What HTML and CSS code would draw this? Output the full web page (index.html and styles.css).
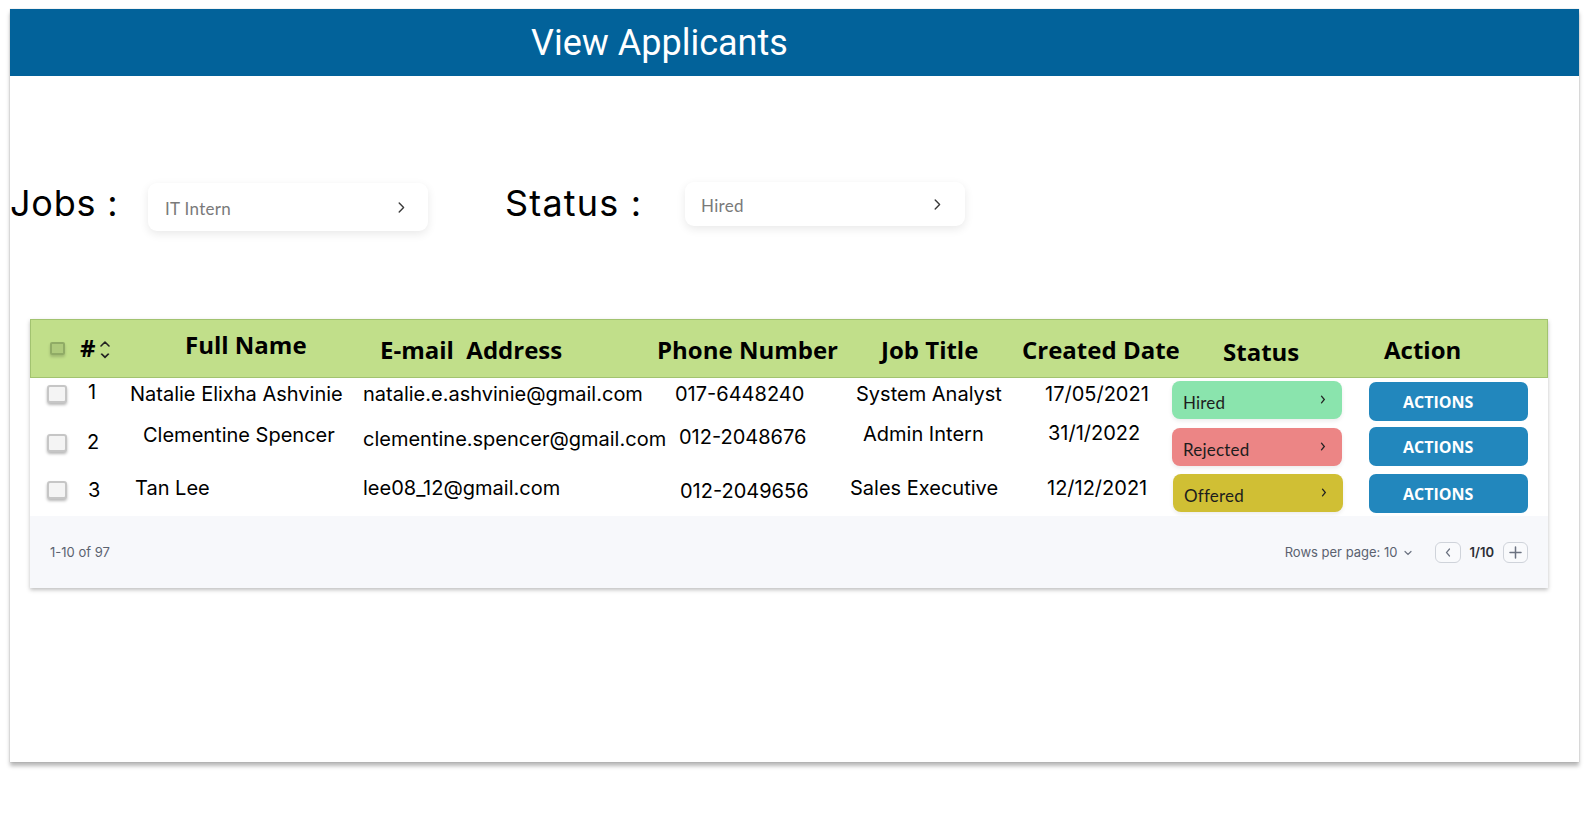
FILE: index.html
```html
<!DOCTYPE html>
<html lang="en">
<head>
<meta charset="utf-8">
<title>View Applicants</title>
<link rel="stylesheet" href="styles.css">
</head>
<body>
<div class="frame">
  <header class="topbar"><h1>View Applicants</h1></header>

  <section class="filters">
    <span class="flabel flabel-jobs">Jobs :</span>
    <div class="select select-jobs">
      <span class="select-text">IT Intern</span>
      <svg class="chev" width="7" height="11" viewBox="0 0 7 11"><path d="M1.2 1 L5.6 5.5 L1.2 10" fill="none" stroke="#3a3a3a" stroke-width="1.4" stroke-linecap="round" stroke-linejoin="round"/></svg>
    </div>
    <span class="flabel flabel-status">Status :</span>
    <div class="select select-status">
      <span class="select-text">Hired</span>
      <svg class="chev" width="7" height="11" viewBox="0 0 7 11"><path d="M1.2 1 L5.6 5.5 L1.2 10" fill="none" stroke="#3a3a3a" stroke-width="1.4" stroke-linecap="round" stroke-linejoin="round"/></svg>
    </div>
  </section>

  <div class="tcard">
    <div class="thead">
      <div class="c0 h-cb"><span class="hcb"></span></div>
      <div class="c1 h-num"><span>#</span>
        <svg class="sort" width="12" height="22" viewBox="0 0 12 22"><path d="M2 7 L6 3 L10 7" fill="none" stroke="#222" stroke-width="1.6" stroke-linecap="round" stroke-linejoin="round"/><path d="M1.5 15 L6 19.5 L10.5 15 L9 14.2 L6 17 L3 14.2 Z" fill="#222"/></svg>
      </div>
      <div class="c2 h h-name">Full Name</div>
      <div class="c3 h h-email">E-mail&nbsp; Address</div>
      <div class="c4 h h-phone">Phone Number</div>
      <div class="c5 h h-job">Job Title</div>
      <div class="c6 h h-date">Created Date</div>
      <div class="c7 h h-status">Status</div>
      <div class="c8 h h-action">Action</div>
    </div>

    <div class="row r1">
      <div class="c0"><span class="cb"></span></div>
      <div class="c1 t num">1</div>
      <div class="c2 t name">Natalie Elixha Ashvinie</div>
      <div class="c3 t email">natalie.e.ashvinie@gmail.com</div>
      <div class="c4 t phone">017-6448240</div>
      <div class="c5 t job">System Analyst</div>
      <div class="c6 t date">17/05/2021</div>
      <div class="c7"><div class="pill pill-hired"><span class="pill-text">Hired</span><svg class="pchev" width="6" height="9" viewBox="0 0 6 9"><path d="M1.5 1.2 L4.3 4.5 L1.5 7.8" fill="none" stroke="#222" stroke-width="1.3" stroke-linecap="round"/></svg></div></div>
      <div class="c8"><button class="btn">ACTIONS</button></div>
    </div>

    <div class="row r2">
      <div class="c0"><span class="cb"></span></div>
      <div class="c1 t num">2</div>
      <div class="c2 t name">Clementine Spencer</div>
      <div class="c3 t email">clementine.spencer@gmail.com</div>
      <div class="c4 t phone">012-2048676</div>
      <div class="c5 t job">Admin Intern</div>
      <div class="c6 t date">31/1/2022</div>
      <div class="c7"><div class="pill pill-rejected"><span class="pill-text">Rejected</span><svg class="pchev" width="6" height="9" viewBox="0 0 6 9"><path d="M1.5 1.2 L4.3 4.5 L1.5 7.8" fill="none" stroke="#222" stroke-width="1.3" stroke-linecap="round"/></svg></div></div>
      <div class="c8"><button class="btn">ACTIONS</button></div>
    </div>

    <div class="row r3">
      <div class="c0"><span class="cb"></span></div>
      <div class="c1 t num">3</div>
      <div class="c2 t name">Tan Lee</div>
      <div class="c3 t email">lee08_12@gmail.com</div>
      <div class="c4 t phone">012-2049656</div>
      <div class="c5 t job">Sales Executive</div>
      <div class="c6 t date">12/12/2021</div>
      <div class="c7"><div class="pill pill-offered"><span class="pill-text">Offered</span><svg class="pchev" width="6" height="9" viewBox="0 0 6 9"><path d="M1.5 1.2 L4.3 4.5 L1.5 7.8" fill="none" stroke="#222" stroke-width="1.3" stroke-linecap="round"/></svg></div></div>
      <div class="c8"><button class="btn">ACTIONS</button></div>
    </div>

    <div class="tfoot">
      <span class="count">1-10 of 97</span>
      <div class="pager">
        <span class="rpp">Rows per page: 10</span>
        <svg class="rpp-chev" width="8" height="6" viewBox="0 0 8 6"><path d="M1 1.5 L4 4.5 L7 1.5" fill="none" stroke="#6b7280" stroke-width="1.2" stroke-linecap="round"/></svg>
        <span class="pbtn pbtn-prev"><svg width="6" height="9" viewBox="0 0 6 9"><path d="M4.5 1 L1.5 4.5 L4.5 8" fill="none" stroke="#6b7280" stroke-width="1.2" stroke-linecap="round"/></svg></span>
        <span class="pages">1/10</span>
        <span class="pbtn pbtn-next"><svg width="13" height="13" viewBox="0 0 13 13"><path d="M6.5 1 V12 M1 6.5 H12" fill="none" stroke="#6b7280" stroke-width="1.5" stroke-linecap="round"/></svg></span>
      </div>
    </div>
  </div>
</div>
</body>
</html>
```

FILE: styles.css
```css
* { box-sizing: border-box; }

html, body { min-height: 816px; }

body {
  margin: 0;
  padding-bottom: 30px;
  background: #ffffff;
  font-family: Inter, "Liberation Sans", sans-serif;
  color: #000;
}

.frame {
  margin: 9px 0 0 10px;
  width: 1569px;
  height: 753px;
  background: #ffffff;
  box-shadow: 0 4px 4px rgba(0, 0, 0, 0.28), 0 0 1px rgba(0, 0, 0, 0.25);
  display: flex;
  flex-direction: column;
}

/* ---------- top bar ---------- */
.topbar {
  height: 67px;
  background: #02629a;
  display: flex;
  align-items: center;
  padding-left: 521px;
}
.topbar h1 {
  margin: 0;
  font: 400 36px/1 Roboto, "Liberation Sans", sans-serif;
  color: #ffffff;
}

/* ---------- filters ---------- */
.filters {
  display: flex;
  align-items: flex-start;
  margin-top: 107px;
  padding-left: 0;
}
.flabel {
  font: 400 36px/40px Inter, "Liberation Sans", sans-serif;
  letter-spacing: 0.8px;
  color: #000;
  white-space: nowrap;
}
.flabel-jobs { width: 138px; }
.flabel-status { width: 180px; margin-left: 77px; letter-spacing: 1.2px; }

.select {
  width: 280px;
  background: #ffffff;
  border-radius: 9px;
  box-shadow: 0 3px 10px rgba(0, 0, 0, 0.09);
  display: flex;
  align-items: center;
  justify-content: space-between;
  font: 400 17px/20px Lato, "Open Sans", sans-serif;
  letter-spacing: 0.3px;
  color: #7a7a7a;
}
.select-jobs { height: 48px; padding: 0 23px 0 17px; }
.select-status { height: 44px; padding: 0 24px 0 16px; margin-top: -1px; }
.select-text { margin-top: 4px; }

/* ---------- table ---------- */
.tcard {
  margin: 88px 0 0 20px;
  width: 1518px;
  background: #ffffff;
  box-shadow: 0 2px 4px rgba(0, 0, 0, 0.25);
}

.thead {
  height: 59px;
  background: #c1df8a;
  border: 1px solid #a2c370;
  display: flex;
  align-items: flex-start;
}

.c0 { width: 45px; flex: none; }
.c1 { width: 45px; flex: none; }
.c2 { width: 235px; flex: none; }
.c3 { width: 300px; flex: none; }
.c4 { width: 195px; flex: none; }
.c5 { width: 160px; flex: none; }
.c6 { width: 155px; flex: none; }
.c7 { width: 190px; flex: none; }
.c8 { flex: 1; }

.h {
  font: 700 24px/30px "Open Sans", "Liberation Sans", sans-serif;
  color: #000;
  white-space: nowrap;
  padding-top: 15px;
}
.h-name { padding-left: 64px; padding-top: 10px; }
.h-email { padding-left: 24px; }
.h-phone { padding-left: 1px; }
.h-job { padding-left: 30px; }
.h-date { padding-left: 11px; }
.h-status { padding-left: 57px; padding-top: 17px; }
.h-action { padding-left: 28px; }

.h-cb { padding: 22px 0 0 19px; }
.hcb {
  display: block;
  width: 15px;
  height: 13px;
  border: 2px solid rgba(70, 90, 50, 0.28);
  border-radius: 2px;
  background: rgba(90, 110, 60, 0.18);
  box-shadow: 0 2px 3px rgba(0, 0, 0, 0.18);
}

.h-num {
  display: flex;
  align-items: flex-start;
  padding: 13px 0 0 4px;
  font: 700 24px/30px "Open Sans", "Liberation Sans", sans-serif;
}
.sort { margin: 6px 0 0 3px; }

/* rows */
.row {
  height: 46px;
  display: flex;
  align-items: flex-start;
}
.t {
  font-size: 20px;
  line-height: 24px;
  color: #000;
  white-space: nowrap;
}

.num { padding-left: 13px; }
.name { padding-left: 10px; }
.email { padding-left: 8px; }
.phone { padding-left: 20px; }
.job { padding-left: 6px; }
.date { padding-left: 35px; }

.r1 .t { padding-top: 4px; }
.r1 .num { padding-top: 2px; }

.r2 .t { padding-top: 0; }
.r2 .num { padding-top: 6px; padding-left: 12px; }
.r2 .name { padding-left: 23px; margin-top: -1px; }
.r2 .email { padding-top: 3px; }
.r2 .phone { padding-left: 24px; padding-top: 1px; }
.r2 .job { padding-left: 13px; margin-top: -2px; }
.r2 .date { padding-left: 38px; margin-top: -3px; }

.r3 .t { padding-top: 6px; }
.r3 .num { padding-top: 8px; }
.r3 .name { padding-left: 15px; }
.r3 .phone { padding-left: 25px; padding-top: 9px; }
.r3 .job { padding-left: 0; }
.r3 .date { padding-left: 37px; }

.cb {
  display: block;
  margin: 7px 0 0 17px;
  width: 20px;
  height: 18px;
  border: 2px solid #c6c6c6;
  border-radius: 3px;
  background: #f4f4f4;
  box-shadow: 0 2px 3px rgba(0, 0, 0, 0.28);
}
.r2 .cb { margin-top: 10px; }
.r3 .cb { margin-top: 11px; }

.pill {
  margin: 3px 0 0 7px;
  width: 170px;
  height: 38px;
  border-radius: 8px;
  display: flex;
  align-items: flex-start;
  justify-content: space-between;
  padding: 0 16px 0 11px;
  box-shadow: 0 2px 4px rgba(0, 0, 0, 0.08);
}
.r2 .pill, .r3 .pill { margin-top: 4px; }
.r3 .pill { margin-left: 8px; }
.pill-text {
  font: 400 17px/20px Lato, "Open Sans", sans-serif;
  letter-spacing: 0.2px;
  color: #1d1d1d;
  padding-top: 12px;
}
.pchev { margin-top: 14px; }
.pill-hired { background: #8ae4ad; }
.pill-rejected { background: #ec8585; }
.pill-offered { background: #d0bf34; }

.btn {
  margin: 4px 0 0 14px;
  width: 159px;
  height: 39px;
  border: none;
  border-radius: 7px;
  background: #2287bd;
  color: #ffffff;
  font: 700 16px/20px "Open Sans", "Liberation Sans", sans-serif;
  text-align: left;
  padding: 0 0 0 34px;
}
.r2 .btn { margin-top: 3px; }

/* footer */
.tfoot {
  height: 72px;
  background: #f7f8fb;
  display: flex;
  align-items: center;
  justify-content: space-between;
  padding: 0 20px 0 20px;
  font: 400 13px/16px Inter, "Liberation Sans", sans-serif;
  color: #5b6270;
}
.pager {
  display: flex;
  align-items: center;
}
.rpp-chev { margin: 1px 0 0 6px; }
.pbtn {
  display: flex;
  align-items: center;
  justify-content: center;
  width: 26px;
  height: 21px;
  border: 1px solid #cfd3da;
  border-radius: 6px;
  background: #f9fafc;
}
.pbtn-prev { margin-left: 23px; }
.pages {
  margin: 0 9px 0 9px;
  font-weight: 600;
  color: #2b2f36;
}
.pbtn-next { width: 25px; }
```
